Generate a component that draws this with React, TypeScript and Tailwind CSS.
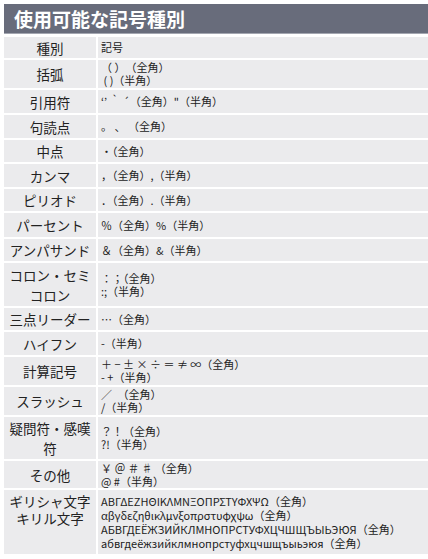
const rows: { label: string[]; lines: string[]; h: string; top?: boolean }[] = [
  { label: ['種別'], lines: ['記号'], h: 'h-[21px]' },
  { label: ['括弧'], lines: ['（ ）　（全角）', ' ( )（半角）'], h: 'h-[28px]' },
  { label: ['引用符'], lines: ['‘’ ｀ ´（全角）"（半角）'], h: 'h-[23px]' },
  { label: ['句読点'], lines: ['。 、 （全角）'], h: 'h-[23px]' },
  { label: ['中点'], lines: ['・（全角）'], h: 'h-[22px]' },
  { label: ['カンマ'], lines: ['，（全角）,（半角）'], h: 'h-[23px]' },
  { label: ['ピリオド'], lines: ['．（全角）.（半角）'], h: 'h-[22px]' },
  { label: ['パーセント'], lines: ['％（全角）%（半角）'], h: 'h-[24px]' },
  { label: ['アンパサンド'], lines: ['＆（全角）&（半角）'], h: 'h-[22px]' },
  { label: ['コロン・セミ', 'コロン'], lines: ['：；（全角）', ':;（半角）'], h: 'h-[43px]' },
  { label: ['三点リーダー'], lines: ['…（全角）'], h: 'h-[22px]' },
  { label: ['ハイフン'], lines: ['-（半角）'], h: 'h-[23px]' },
  { label: ['計算記号'], lines: ['＋ − ± × ÷ ＝ ≠ ∞（全角）', '- +（半角）'], h: 'h-[28px]' },
  { label: ['スラッシュ'], lines: ['／　（全角）', '/（半角）'], h: 'h-[28px]' },
  { label: ['疑問符・感嘆', '符'], lines: ['？！（全角）', '?!（半角）'], h: 'h-[42px]' },
  { label: ['その他'], lines: ['￥ ＠ ＃ ♯ （全角）', '@ #（半角）'], h: 'h-[27px]' },
  {
    label: ['ギリシャ文字', 'キリル文字'],
    lines: [
      'ΑΒΓΔΕΖΗΘΙΚΛΜΝΞΟΠΡΣΤΥΦΧΨΩ（全角）',
      'αβγδεζηθικλμνξοπρστυφχψω（全角）',
      'АБВГДЕЁЖЗИЙКЛМНОПРСТУФХЦЧШЩЪЫЬЭЮЯ（全角）',
      'абвгдеёжзийклмнопрстуфхцчшщъыьэюя（全角）',
    ],
    h: 'h-[64px]',
    top: true,
  },
]

export default function App() {
  return (
    <div className="w-[428px] h-[559px] bg-white pt-[4px] pl-[4px] font-['Noto_Sans_CJK_JP',sans-serif]">
      <div className="h-[30px] bg-[#686c7b] border-b border-[#a3a6b0] pl-[10px] text-white font-bold text-[19px] leading-[29px]">
        使用可能な記号種別
      </div>
      <div className="mt-[3px] grid grid-cols-[92px_1fr] gap-[2px] bg-white">
        {rows.map((r) => (
          <div key={r.label.join('')} className="contents">
            <div
              className={`${r.h} bg-[#ebebed] flex flex-col items-center text-[13.5px] text-[#222] ${
                r.top ? 'justify-start pt-[3px] leading-[17px]' : 'justify-center leading-[20px]'
              }`}
            >
              {r.label.map((l) => (
                <div key={l}>{l}</div>
              ))}
            </div>
            <div
              className={`${r.h} bg-[#ebebed] flex flex-col justify-center pl-[3px] text-[11px] text-[#222] whitespace-pre ${
                r.top ? 'leading-[14px]' : 'leading-[13px]'
              }`}
            >
              {r.lines.map((l) => (
                <div key={l}>{l}</div>
              ))}
            </div>
          </div>
        ))}
      </div>
    </div>
  )
}
